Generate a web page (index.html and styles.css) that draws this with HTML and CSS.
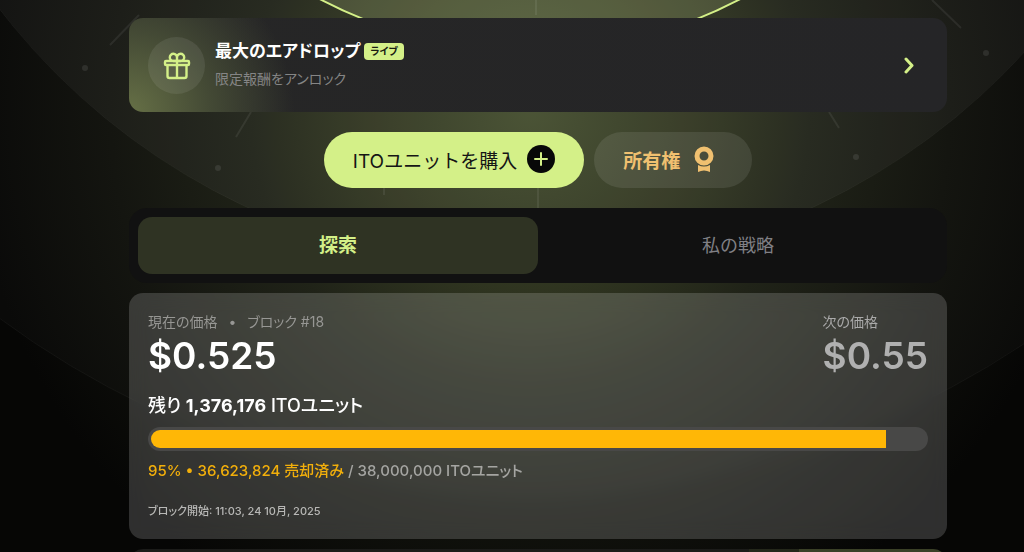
FILE: index.html
```
<!DOCTYPE html>
<html lang="ja">
<head>
  <meta charset="UTF-8">
  <meta name="viewport" content="width=device-width, initial-scale=1">
  <title>ITOユニット</title>
  <link rel="stylesheet" href="styles.css">
</head>
<body>

  <svg class="backdrop" viewBox="0 0 1024 552" preserveAspectRatio="xMidYMin slice" aria-hidden="true">
    <defs>
      <radialGradient id="glow" gradientUnits="userSpaceOnUse" cx="530" cy="110" r="560">
        <stop offset="0" stop-color="#414a2a"/>
        <stop offset="0.25" stop-color="#31371f"/>
        <stop offset="0.5" stop-color="#1c1f14"/>
        <stop offset="0.75" stop-color="#10110c"/>
        <stop offset="1" stop-color="#060605"/>
      </radialGradient>
    </defs>
    <rect width="1024" height="552" fill="url(#glow)"/>
    <circle cx="530" cy="-400" r="893" fill="#fff" fill-opacity="0.02" stroke="#fff" stroke-opacity="0.04"/>
    <circle cx="530" cy="-400" r="670" fill="#fff" fill-opacity="0.04" stroke="#fff" stroke-opacity="0.03"/>
    <circle cx="530" cy="-400" r="451" fill="#e8ffb0" fill-opacity="0.15" stroke="#d4f088" stroke-width="2"/>
    <g stroke="#fff" stroke-opacity="0.07" stroke-width="2">
      <path d="M139 15L110 45M932 0l29 28M251 112l-15 25M829 112l10 16M384 186v9M536 0v15M538 188v20"/>
    </g>
    <g fill="#fff" fill-opacity="0.09">
      <circle cx="85" cy="68" r="3"/>
      <circle cx="986" cy="53" r="3"/>
      <circle cx="218" cy="168" r="3"/>
      <circle cx="856" cy="157" r="3"/>
    </g>
  </svg>

  <main class="page">

    <a class="airdrop" href="#airdrop">
      <span class="airdrop-icon">
        <svg width="28" height="28" viewBox="0 0 28 28" fill="none" stroke="#d4f088" stroke-width="2.400" stroke-linejoin="round">
          <rect x="2" y="9" width="24" height="4" rx="1"/>
          <path d="M4.500 13v11a2 2 0 0 0 2 2h15a2 2 0 0 0 2-2V13M14 9v17"/>
          <path d="M14 9h-3.500a3.600 3.600 0 1 1 3.500-3.500V9zM14 9h3.500A3.600 3.600 0 1 0 14 5.500V9z"/>
        </svg>
      </span>
      <span class="airdrop-text">
        <span class="airdrop-title">最大のエアドロップ <span class="badge">ライブ</span></span>
        <span class="airdrop-sub">限定報酬をアンロック</span>
      </span>
      <svg class="chevron" width="12" height="18" viewBox="0 0 12 18" fill="none" stroke="#d4f088" stroke-width="3" stroke-linecap="round" stroke-linejoin="round">
        <path d="M3 2l6 6.500L3 15"/>
      </svg>
    </a>

    <div class="actions">
      <button class="btn buy" type="button">
        ITOユニットを購入
        <svg width="28" height="28" viewBox="0 0 28 28">
          <circle cx="14" cy="14" r="14" fill="#080808"/>
          <path d="M14 8v12M8 14h12" stroke="#d4f088" stroke-width="2" stroke-linecap="round"/>
        </svg>
      </button>
      <button class="btn own" type="button">
        所有権
        <svg width="20" height="26" viewBox="0 0 20 26">
          <circle cx="10" cy="10" r="7" fill="none" stroke="#f0c070" stroke-width="5"/>
          <path d="M4 19q6 3 12 0v7l-3-1q-3-1-6 0l-3 1z" fill="#f0c070"/>
        </svg>
      </button>
    </div>

    <div class="tabs" role="tablist">
      <button class="tab active" type="button" role="tab" aria-selected="true">探索</button>
      <button class="tab" type="button" role="tab" aria-selected="false">私の戦略</button>
    </div>

    <section class="price-card">
      <div class="prices">
        <div>
          <div class="label">現在の価格<span class="dot">•</span>ブロック #18</div>
          <div class="price">$0.525</div>
        </div>
        <div class="next">
          <div class="label">次の価格</div>
          <div class="price">$0.55</div>
        </div>
      </div>
      <div class="remaining">残り <b>1,376,176</b> ITOユニット</div>
      <div class="bar" role="progressbar" aria-label="売却済み" aria-valuenow="95" aria-valuemin="0" aria-valuemax="100">
        <div class="bar-fill" style="width: 95%"></div>
      </div>
      <div class="sold"><span class="sold-now">95% • 36,623,824 売却済み</span> / 38,000,000 ITOユニット</div>
      <div class="started">ブロック開始: 11:03, 24 10月, 2025</div>
    </section>

    <section class="next-card">
      <div class="ribbon"></div>
    </section>

  </main>

</body>
</html>
```
FILE: styles.css
```
* {
  box-sizing: border-box;
}

body {
  margin: 0;
  background: #060605;
  color: #fff;
  font-family: Inter, "Noto Sans CJK JP", sans-serif;
  font-feature-settings: "palt";
}

.backdrop {
  position: absolute;
  top: 0;
  left: 0;
  width: 100%;
  height: 100%;
}

.page {
  position: relative;
  display: flex;
  flex-direction: column;
  gap: 10px;
  height: 100vh;
  padding: 18px 77px 0 129px;
  overflow: hidden;
}

.page > * {
  flex-shrink: 0;
}

.airdrop {
  display: flex;
  align-items: center;
  gap: 10px;
  padding: 19px 32px 18px 19px;
  border-radius: 14px;
  background: radial-gradient(circle at 0 100%, #667046 0, #444a35 80px, rgba(40, 40, 38, 0) 165px), linear-gradient(90deg, #262626, #252527);
  color: #fff;
  text-decoration: none;
}

.airdrop-icon {
  display: flex;
  align-items: center;
  justify-content: center;
  width: 57px;
  height: 57px;
  border-radius: 50%;
  background: rgba(255, 255, 255, 0.08);
}

.airdrop-text {
  flex: 1;
  display: flex;
  flex-direction: column;
}

.airdrop-title {
  display: flex;
  align-items: center;
  gap: 4px;
  font-size: 17px;
  font-weight: 700;
  line-height: 27px;
}

.badge {
  padding: 0 6px;
  border-radius: 4px;
  background: #d4f088;
  color: #1a1c12;
  font-size: 10px;
  line-height: 17px;
}

.airdrop-sub {
  color: #858585;
  font-size: 14px;
  line-height: 28px;
}

.actions {
  display: flex;
  justify-content: center;
  gap: 10px;
  padding: 10px 0;
}

.btn {
  display: flex;
  align-items: center;
  height: 56px;
  padding-top: 0;
  padding-bottom: 2px;
  border: 0;
  border-radius: 28px;
  font-family: inherit;
  font-size: 19px;
  cursor: pointer;
}

.buy {
  gap: 10px;
  padding-left: 29px;
  padding-right: 29px;
  background: #d4f088;
  color: #151515;
  font-feature-settings: normal;
}

.own {
  gap: 14px;
  padding-left: 29px;
  padding-right: 38px;
  background: rgba(255, 255, 255, 0.09);
  color: #f0c070;
  font-weight: 700;
}

.tabs {
  display: flex;
  padding: 9px;
  border-radius: 18px;
  background: #111;
}

.tab {
  flex: 1;
  height: 57px;
  padding: 0 0 4px;
  border: 0;
  border-radius: 14px;
  background: none;
  color: #808085;
  font-family: inherit;
  font-size: 18px;
  cursor: pointer;
}

.tab.active {
  background: #2f3323;
  color: #d4f088;
  font-size: 19px;
  font-weight: 700;
}

.price-card {
  padding: 18px 19px;
  border-radius: 14px;
  background: rgba(255, 255, 255, 0.17);
  backdrop-filter: blur(10px);
}

.prices {
  display: flex;
  justify-content: space-between;
}

.label {
  color: #979794;
  font-size: 14px;
  line-height: 22px;
}

.dot {
  margin: 0 11px;
}

.price {
  font-size: 37px;
  font-weight: 600;
  line-height: 46px;
}

.next .label {
  color: #aaa;
}

.next .price {
  color: #b0b0b0;
}

.remaining {
  margin-top: 11px;
  font-size: 18px;
  font-weight: 500;
  line-height: 32px;
}

.bar {
  margin-top: 5px;
  padding: 3px;
  border-radius: 12px;
  background: #484847;
}

.bar-fill {
  height: 18px;
  border-radius: 9px 0 0 9px;
  background: #ffb706;
}

.sold {
  margin-top: 8px;
  color: #a5a5a2;
  font-size: 15px;
  font-weight: 500;
  line-height: 24px;
}

.sold-now {
  color: #f2af0b;
}

.started {
  margin-top: 18px;
  color: #b8b8b6;
  font-size: 11px;
  font-weight: 500;
  line-height: 20px;
}

.next-card {
  height: 80px;
  border-radius: 14px;
  background: #1b1b19;
  overflow: hidden;
}

.ribbon {
  width: 198px;
  height: 30px;
  margin-left: auto;
  background: linear-gradient(90deg, #24271a 50px, #3a4026 50px);
}
```
